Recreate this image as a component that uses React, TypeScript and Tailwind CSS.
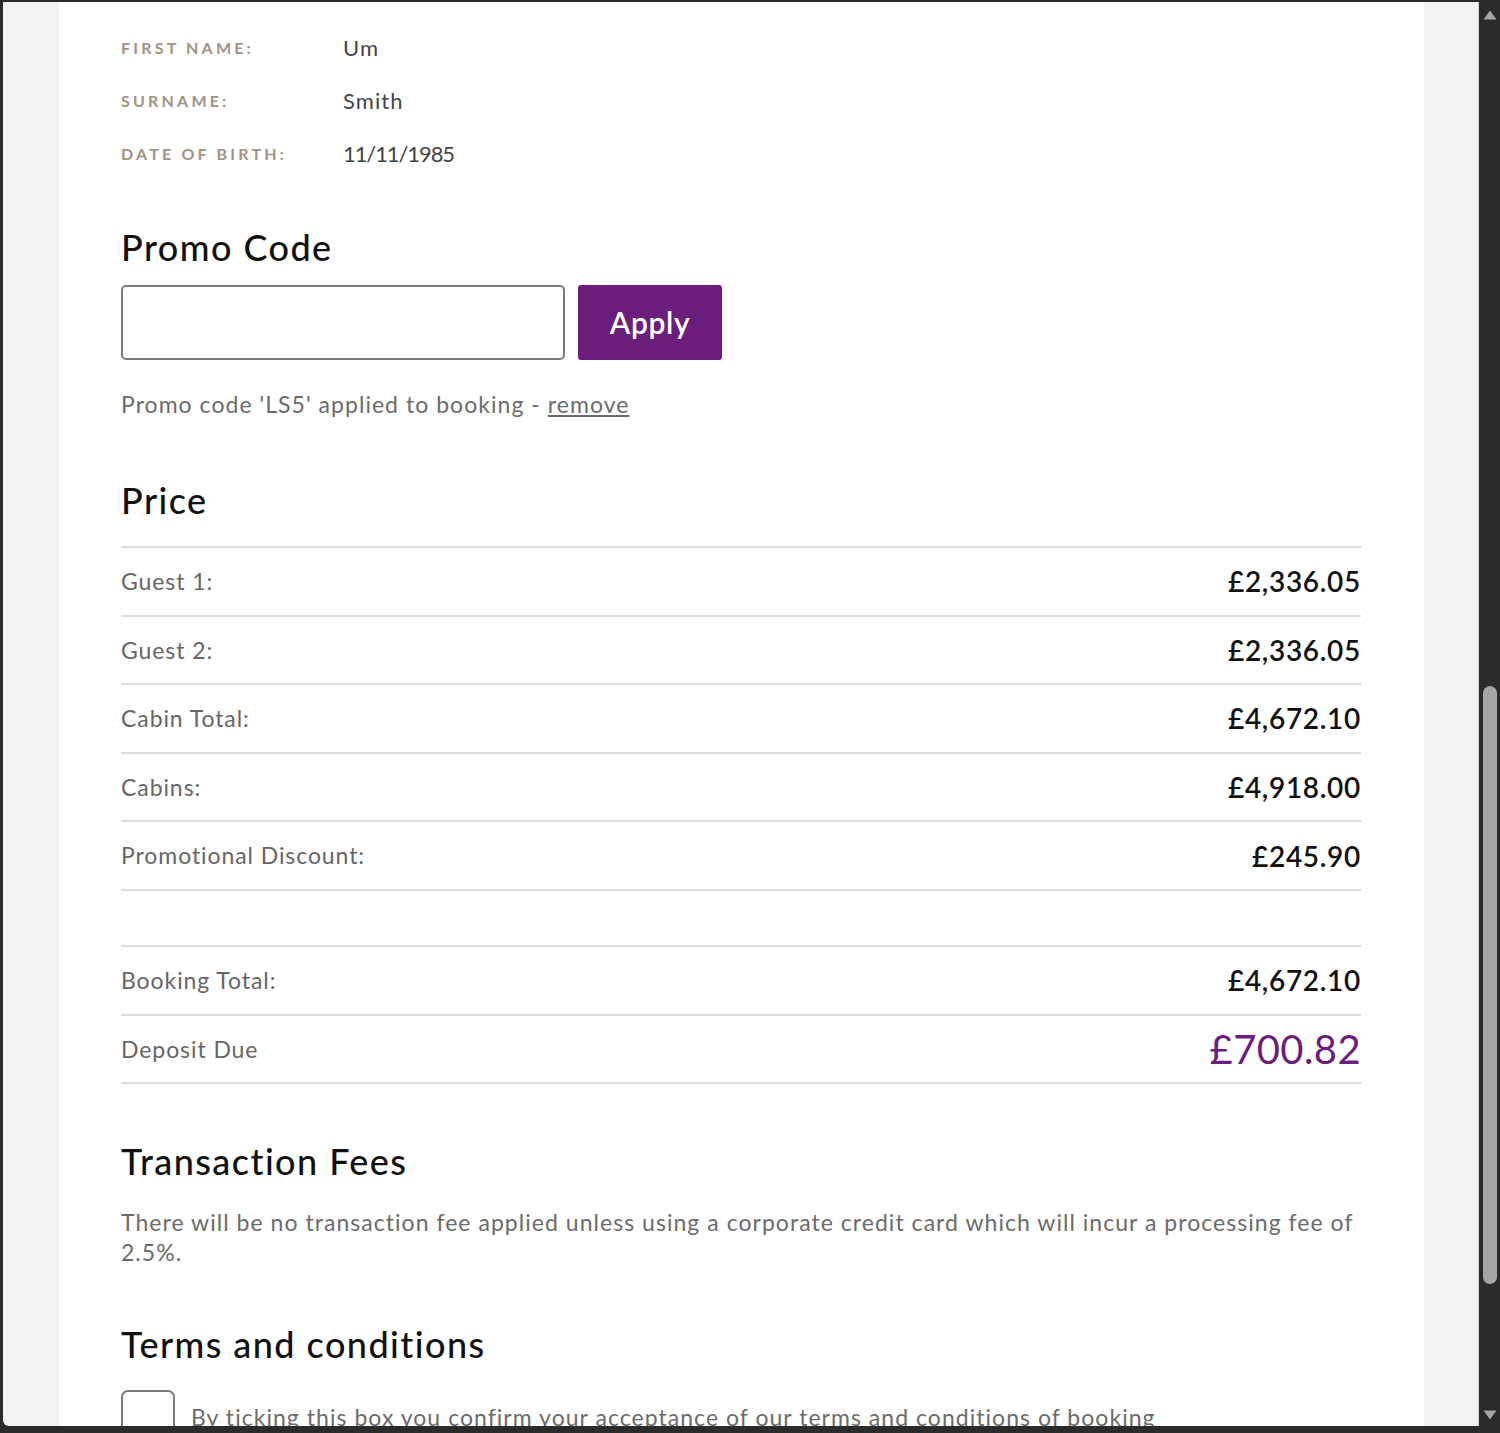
export default function App() {
  const details = [
    ["First name:", "Um", "tracking-[0.05em]"],
    ["Surname:", "Smith", "tracking-[0.05em]"],
    ["Date of birth:", "11/11/1985", "tracking-[-0.05em]"],
  ];
  const group1 = [
    ["Guest 1:", "£2,336.05"],
    ["Guest 2:", "£2,336.05"],
    ["Cabin Total:", "£4,672.10"],
    ["Cabins:", "£4,918.00"],
    ["Promotional Discount:", "£245.90"],
  ];
  const label = "text-[23px] tracking-[0.04em] text-[#666]";
  const value = "text-[28px] tracking-[0.025em] font-semibold text-[#111]";
  const heading = "h-[40px] leading-[40px] text-[36px] tracking-[0.04em] font-medium text-[#111]";
  return (
    <div className="w-[1500px] h-[1433px] bg-[#2b2b2b] flex overflow-hidden font-[Lato,sans-serif]">
      <div className="flex-1 pt-[2px] pl-[3px] pb-[7px] flex flex-col">
        <div className="flex-1 min-h-0 bg-[#f2f2f2] rounded-bl-[6px] overflow-hidden pl-[56px] pr-[54px] flex border-r border-[#d4d4d4]">
          <div className="flex-1 bg-white overflow-hidden pl-[62px] pr-[63px] pt-[19px]">
            {details.map(([l, v, t]) => (
              <div key={l} className="flex h-[53px] items-center">
                <span className="w-[222px] text-[16px] font-bold tracking-[0.2em] text-[#9f9385] uppercase">{l}</span>
                <span className={`text-[22px] text-[#444] ${t}`}>{v}</span>
              </div>
            ))}

            <h2 className={`mt-[47px] ${heading}`}>Promo Code</h2>
            <div className="mt-[18px] flex gap-[13px]">
              <div className="w-[444px] h-[75px] border-2 border-[#7a7a7a] rounded-[5px]" />
              <button className="w-[144px] h-[75px] bg-[#6b1e7c] rounded-[3px] text-white text-[30px] tracking-[0.02em] font-semibold">Apply</button>
            </div>
            <p className="mt-[29px] text-[23px] tracking-[0.045em] leading-[30px] text-[#6b6b6b]">
              Promo code &apos;LS5&apos; applied to booking - <span className="underline">remove</span>
            </p>

            <h2 className={`mt-[61px] ${heading}`}>Price</h2>
            <div className="mt-[26px] border-t-2 border-[#dedede]">
              {group1.map(([l, v]) => (
                <div key={l} className="h-[68.6px] border-b-2 border-[#dedede] flex items-center justify-between">
                  <span className={label}>{l}</span>
                  <span className={value}>{v}</span>
                </div>
              ))}
            </div>
            <div className="mt-[54px] border-t-2 border-[#dedede]">
              <div className="h-[68.6px] border-b-2 border-[#dedede] flex items-center justify-between">
                <span className={label}>Booking Total:</span>
                <span className={value}>£4,672.10</span>
              </div>
              <div className="h-[68.6px] border-b-2 border-[#dedede] flex items-center justify-between">
                <span className={label}>Deposit Due</span>
                <span className="text-[40px] tracking-[0.01em] text-[#6b1e7c]">£700.82</span>
              </div>
            </div>

            <h2 className={`mt-[57px] ${heading}`}>Transaction Fees</h2>
            <p className="mt-[26px] text-[23px] tracking-[0.045em] leading-[30px] text-[#6b6b6b]">
              There will be no transaction fee applied unless using a corporate credit card which will incur a processing fee of 2.5%.
            </p>

            <h2 className={`mt-[57px] ${heading}`}>Terms and conditions</h2>
            <div className="mt-[26px] flex items-center gap-[16px]">
              <div className="w-[54px] h-[54px] shrink-0 border-2 border-[#7a7a7a] rounded-[7px]" />
              <span className="text-[23px] tracking-[0.045em] text-[#6b6b6b] whitespace-nowrap">
                By ticking this box you confirm your acceptance of our terms and conditions of booking
              </span>
            </div>
          </div>
        </div>
      </div>
      <div className="w-[21px] flex flex-col items-center">
        <svg className="mt-[10px]" width="14" height="10" viewBox="0 0 14 10">
          <path d="M7 0.5 L13.5 9.5 L0.5 9.5 Z" fill="#a6a6a6" />
        </svg>
        <div className="mt-[666px] w-[14px] h-[598px] rounded-full bg-[#a6a6a6]" />
        <div className="flex-1" />
        <svg className="mb-[13px]" width="14" height="10" viewBox="0 0 14 10">
          <path d="M0.5 0.5 L13.5 0.5 L7 9.5 Z" fill="#a6a6a6" />
        </svg>
      </div>
    </div>
  );
}
